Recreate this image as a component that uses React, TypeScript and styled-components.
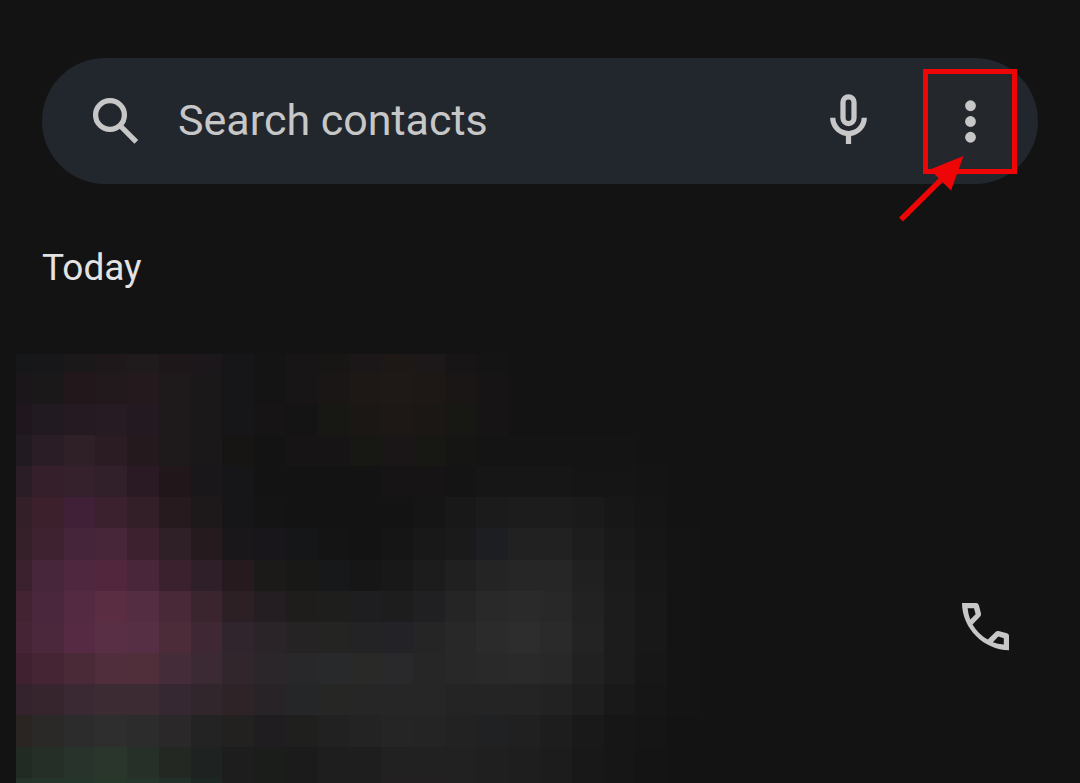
import React from "react";
import styled, { createGlobalStyle } from "styled-components";

const GlobalStyle = createGlobalStyle`
  *, *::before, *::after { box-sizing: border-box; }
  body {
    margin: 0;
    background: #131313;
    font-family: Roboto, "Liberation Sans", sans-serif;
  }
`;

const Page = styled.main`
  display: flex;
  flex-direction: column;
  padding-top: 58px;
  overflow: hidden;
`;

const SearchBar = styled.form`
  display: flex;
  align-items: flex-start;
  margin: 0 42px;
  padding: 32px 36px 31px 43px;
  border-radius: 63px;
  background: #22262d;
`;

const IconButton = styled.button`
  display: block;
  flex: none;
  width: 63px;
  height: 63px;
  padding: 0;
  border: 0;
  background: none;
  color: #c7c7c7;
`;

const Icon = styled.svg`
  display: block;
  width: 63px;
  height: 63px;
  fill: currentColor;
`;

const SearchInput = styled.input`
  flex: 1;
  min-width: 0;
  height: 60px;
  margin: 0 28px 0 30px;
  padding: 0;
  border: 0;
  outline: 0;
  background: none;
  color: #c7c7c7;
  font-family: inherit;
  font-size: 43px;
  &::placeholder {
    color: #c7c7c7;
    opacity: 1;
  }
`;

const MenuSlot = styled.div`
  position: relative;
  flex: none;
  margin-left: 59px;
`;

const Highlight = styled.div`
  position: absolute;
  top: -21px;
  left: -16px;
  width: 94px;
  height: 105px;
  border: 5px solid #ee0606;
  background: #24272b;
`;

const MenuButton = styled(IconButton)`
  position: relative;
`;

const Arrow = styled.svg`
  position: absolute;
  top: 60px;
  left: -44px;
  width: 74px;
  height: 76px;
  pointer-events: none;
`;

const SectionTitle = styled.h2`
  margin: 60px 42px 0;
  color: #e3e3e3;
  font-size: 37px;
  font-weight: 400;
  line-height: 48px;
`;

const CallEntry = styled.section`
  display: flex;
  align-items: flex-end;
  justify-content: space-between;
  margin-top: 62px;
  padding: 0 63px 0 16px;
`;

const Mosaic = styled.svg`
  display: block;
  flex: none;
  width: 683px;
  height: 429px;
`;

const CallButton = styled(IconButton)`
  margin-bottom: 125px;
`;

const columns = [0, 16, 48, 79, 111, 143, 175, 206, 238, 270, 302, 333, 365, 397, 429, 460, 492, 524, 556, 588, 619, 651, 683];
const rows = [0, 19, 50, 81, 112, 143, 174, 206, 237, 268, 299, 330, 361, 393, 424, 429];

const tones = [
  "151718 17171a 1b181a 1e181b 1f1a1c 1d171a 1b171a 161518 131413 171515 171615 1b1719 1d1716 1c1718 171515 131413",
  "1a161a 1b181a 22181c 22191d 24191d 1e1a1c 1b181a 161518 131413 171515 1a1615 1d1715 1e1816 1d1715 1a1615 161414",
  "20161e 221a21 261a22 261b23 221921 1e1a1c 1b181a 161518 161414 131413 171714 1a1714 1d1716 1a1714 171714 161414",
  "221a21 2b1d25 2f1f27 2b1c24 241a1d 1e1a1c 1b181a 161514 131313 161415 161415 171714 1a1516 171714 151514 141414 141414 141414 141414 141414",
  "2b1d25 341f2a 35212b 311f29 2a1a23 21171b 1a171a 161518 131313 131313 131313 131313 171415 161415 141414 161616 161616 161616 151515 151515 141414",
  "321f28 3c212d 402036 3b212d 321f28 261a1f 1d181a 161518 141414 131313 131313 131313 131313 151515 181818 1b1b1b 1c1c1c 1c1c1c 1a1a1a 171717 151515 131313",
  "351f29 3f2230 452539 48263a 3d212e 2f1f27 251b1f 1a171a 18161a 151618 131413 131313 151515 181818 1a1a1a 1d1e21 212121 212121 1d1d1d 191919 161616 141414",
  "3a212d 47253a 4f2840 52273e 492639 3b212e 2f1f28 261a1e 1b1a19 181817 17181a 161616 181818 1c1c1c 202020 242424 262626 262626 202020 1b1b1b 171717 141414",
  "432331 4a273c 532a42 5a2d42 542d43 492837 3a242e 2d2025 241d22 1f1c1c 1e1e1d 1e1e21 1d1d1d 202023 252525 292929 2a2a2a 282828 222222 1c1c1c 181818 141414",
  "452535 4b283c 552a42 592f46 562f45 4c2c38 3f2834 31252d 2a2327 252323 242423 232326 232327 252525 282828 2b2b2b 2d2d2d 2a2a2a 232323 1c1c1c 181818 141414",
  "402130 452533 4b2a38 502e3c 502f3b 452c39 3b2933 30262b 2a262a 282729 28292b 292928 29292b 262626 282828 292929 2a2a2a 282828 212121 1c1c1c 171717 141414",
  "34222c 37252e 3a2932 3d2b34 3d2b34 362832 31262b 2e2327 272327 252628 262625 262626 262626 262626 242424 242424 242424 222222 1e1e1e 191919 161616 141414",
  "2a2423 2b2828 2c2c2c 2e2e2e 2c2c2c 2a2828 242323 222120 201d21 1f1f1e 212121 232323 252525 242424 222222 202123 202020 1d1d1d 191919 161616 151515 131313",
  "212a23 252f27 28332c 2a352c 262f28 232823 1e2321 1d1d1d 1b1d1b 1b1b1b 1e1e1e 1e1e1e 212121 212121 212121 1f1f1f 1e1e1e 1c1c1c 181818 161616 141414 131313",
  "243229 26352c 26352c 27382b 25352c 222e28 1c2623 1d1d1d 1b1d1b 1b1b1b 1e1e1e 1e1e1e 221f20 221f20 212121 1f1f1f 1e1e1e 1c1c1c 181818 161616 141414 131313",
].map((line) => line.split(" "));

function PixelatedContact() {
  return (
    <Mosaic viewBox="0 0 683 429" shapeRendering="crispEdges" aria-hidden="true">
      {tones.map((line, r) =>
        line.map((tone, c) => (
          <rect
            key={`${r}-${c}`}
            x={columns[c]}
            y={rows[r]}
            width={columns[c + 1] - columns[c]}
            height={rows[r + 1] - rows[r]}
            fill={`#${tone}`}
          />
        ))
      )}
    </Mosaic>
  );
}

export default function App() {
  return (
    <>
      <GlobalStyle />
      <Page>
        <SearchBar role="search" onSubmit={(e: React.FormEvent) => e.preventDefault()}>
          <IconButton type="submit" aria-label="Search">
            <Icon viewBox="0 0 63 63">
              <g fill="none" stroke="currentColor" strokeWidth="5.3">
                <circle cx="25" cy="25" r="14.4" />
                <path d="M34.500 35 51.300 51.800" />
              </g>
            </Icon>
          </IconButton>
          <SearchInput type="text" aria-label="Search contacts" placeholder="Search contacts" />
          <IconButton type="button" aria-label="Voice search">
            <Icon viewBox="0 0.4 24 24">
              <path
                fillRule="evenodd"
                d="M12 2a3.100 3.100 0 0 0-3.100 3.100v6a3.100 3.100 0 0 0 6.200 0v-6A3.100 3.100 0 0 0 12 2zm0 2a1.100 1.100 0 0 1 1.100 1.100v6a1.100 1.100 0 0 1-2.200 0v-6A1.100 1.100 0 0 1 12 4z"
              />
              <path d="M17 11c0 2.760-2.240 5-5 5s-5-2.240-5-5H5c0 3.530 2.610 6.430 6 6.920V21h2v-3.080c3.390-.49 6-3.390 6-6.920h-2z" />
            </Icon>
          </IconButton>
          <MenuSlot>
            <Highlight />
            <MenuButton type="button" aria-label="More options">
              <Icon viewBox="0 0 24 24">
                <circle cx="12" cy="6" r="2.050" />
                <circle cx="12" cy="12" r="2.050" />
                <circle cx="12" cy="18" r="2.050" />
              </Icon>
            </MenuButton>
            <Arrow viewBox="0 0 74 76" aria-hidden="true">
              <path d="M6 69.500 50 26" stroke="#ee0606" strokeWidth="5.500" />
              <path d="M68.500 6 35 19.500 56 40.500z" fill="#ee0606" />
            </Arrow>
          </MenuSlot>
        </SearchBar>
        <SectionTitle>Today</SectionTitle>
        <CallEntry>
          <PixelatedContact />
          <CallButton type="button" aria-label="Call">
            <Icon viewBox="0 0 63 63">
              <path
                fillRule="evenodd"
                d="M8 8H22Q24.300 8 24.900 10.200L27 18.600Q27.400 20.300 26.200 21.500L18.500 29.500Q24.500 39.500 33.800 44.600L41.500 37Q42.800 35.700 44.600 36.100L53 38.200Q55 38.700 55 40.800V55.200C30 55 8 33.500 8 8ZM13.600 13.200H20L21.600 19.200 16.200 24.600Q14.300 19.800 13.600 13.200ZM49.800 49.600V43.200L44.400 41.600 38.800 47.200Q43.700 49.100 49.800 49.600Z"
              />
            </Icon>
          </CallButton>
        </CallEntry>
      </Page>
    </>
  );
}
